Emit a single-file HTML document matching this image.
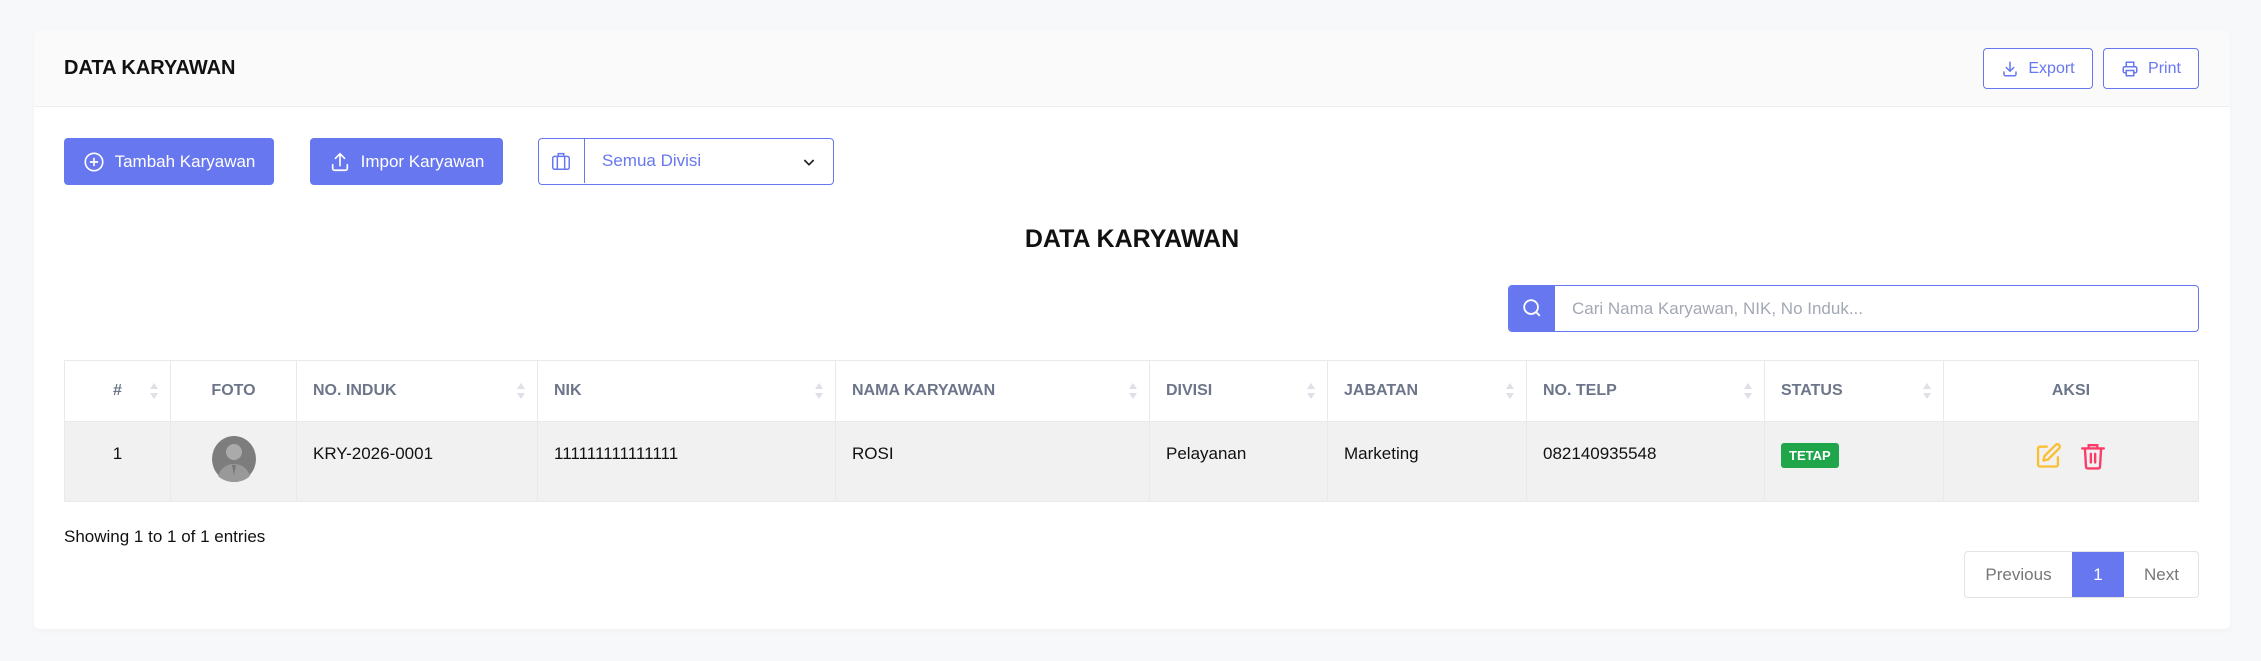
<!DOCTYPE html>
<html><head><meta charset="utf-8"><style>
*{box-sizing:border-box;margin:0;padding:0}
body{width:2261px;height:661px;background:#f7f8fa;font-family:"Liberation Sans",Arial,sans-serif;position:relative;overflow:hidden;color:#111}
.a{position:absolute}
.card{left:34px;top:30px;width:2196px;height:599px;background:#fff;border-radius:5px;box-shadow:0 2px 6px rgba(0,0,0,.03)}
.hdr{left:34px;top:30px;width:2196px;height:77px;background:#fafafa;border-bottom:1px solid #eee;border-radius:5px 5px 0 0}
.btn{background:#6777ef;color:#fff;border-radius:4px;font-size:17px;display:flex;align-items:center;justify-content:center;gap:10px}
.obtn{border:1.5px solid #6777ef;color:#6777ef;border-radius:4px;font-size:16px;display:flex;align-items:center;justify-content:center;gap:9px;background:#fff}
table{border-collapse:collapse;position:absolute;left:64px;top:360px;width:2135px}
th,td{border:1px solid #e9e9e9;text-align:left;padding-left:16px}
th{height:61px;color:#6c7589;font-size:16px;font-weight:bold;position:relative}
td{height:80px;background:#f1f1f1;font-size:17px;vertical-align:top;padding-top:22px}
.s{position:absolute;right:12px;top:22px;width:8px;height:18px}
.s:before{content:"";position:absolute;left:0;top:0;border:4px solid transparent;border-bottom:6px solid #dde0e6;border-top:0}
.s:after{content:"";position:absolute;left:0;top:10px;border:4px solid transparent;border-top:6px solid #dde0e6;border-bottom:0}
</style></head><body>
<div class="a card"></div>
<div class="a hdr"></div>
<div class="a" style="left:64px;top:57px;font-size:20px;font-weight:bold;color:#111">DATA KARYAWAN</div>
<div class="a obtn" style="left:1983px;top:48px;width:110px;height:41px"><svg width="18" height="18" viewBox="0 0 24 24" fill="none" stroke="#6777ef" stroke-width="2" stroke-linecap="round"><path d="M4 16v3a2 2 0 0 0 2 2h12a2 2 0 0 0 2-2v-3M12 3v12M7 10l5 5 5-5"/></svg>Export</div>
<div class="a obtn" style="left:2103px;top:48px;width:96px;height:41px"><svg width="18" height="18" viewBox="0 0 24 24" fill="none" stroke="#6777ef" stroke-width="2"><path d="M7 9V3h10v6M7 17H5a2 2 0 0 1-2-2v-4a2 2 0 0 1 2-2h14a2 2 0 0 1 2 2v4a2 2 0 0 1-2 2h-2M7 14h10v7H7z"/></svg>Print</div>

<div class="a btn" style="left:64px;top:138px;width:210px;height:47px"><svg width="22" height="22" viewBox="0 0 24 24" fill="none" stroke="#fff" stroke-width="1.8"><circle cx="12" cy="12" r="9.5"/><path d="M12 7.5v9M7.5 12h9"/></svg>Tambah Karyawan</div>
<div class="a btn" style="left:310px;top:138px;width:193px;height:47px"><svg width="22" height="22" viewBox="0 0 24 24" fill="none" stroke="#fff" stroke-width="1.8" stroke-linecap="round"><path d="M4 15v4a2 2 0 0 0 2 2h12a2 2 0 0 0 2-2v-4M12 16V3M7 8l5-5 5 5"/></svg>Impor Karyawan</div>
<div class="a" style="left:538px;top:138px;width:296px;height:47px;border:1.5px solid #6777ef;border-radius:4px;background:#fff">
 <div class="a" style="left:45px;top:0;height:44px;border-left:1.5px solid #6777ef"></div>
 <svg class="a" style="left:11px;top:11px" width="22" height="22" viewBox="0 0 24 24" fill="none" stroke="#6777ef" stroke-width="1.6"><rect x="3" y="7" width="18" height="14" rx="2"/><path d="M9 7V4h6v3M8 7v14M16 7v14"/></svg>
 <div class="a" style="left:63px;top:12px;font-size:17px;color:#6777ef">Semua Divisi</div>
 <svg class="a" style="left:262px;top:15px" width="16" height="16" viewBox="0 0 24 24" fill="none" stroke="#222" stroke-width="2.5"><path d="M5 9l7 7 7-7"/></svg>
</div>

<div class="a" style="left:0;width:2264px;top:225px;text-align:center;font-size:25px;font-weight:bold">DATA KARYAWAN</div>

<div class="a" style="left:1508px;top:285px;width:691px;height:47px;border:1.5px solid #6777ef;border-radius:4px;background:#fff;overflow:hidden">
 <div class="a" style="left:0;top:0;width:46px;height:45px;background:#6777ef"></div>
 <svg class="a" style="left:12px;top:11px" width="22" height="22" viewBox="0 0 24 24" fill="none" stroke="#fff" stroke-width="2"><circle cx="11" cy="11" r="7.5"/><path d="M16.5 16.5l4 4"/></svg>
 <div class="a" style="left:63px;top:13px;font-size:17px;color:#a3a8b4">Cari Nama Karyawan, NIK, No Induk...</div>
</div>

<table>
<tr>
<th style="width:106px;text-align:center;padding:0">#<span class="s" style="background:none"></span></th>
<th style="width:126px;text-align:center;padding:0">FOTO</th>
<th style="width:241px">NO. INDUK<span class="s"></span></th>
<th style="width:298px">NIK<span class="s"></span></th>
<th style="width:314px">NAMA KARYAWAN<span class="s"></span></th>
<th style="width:178px">DIVISI<span class="s"></span></th>
<th style="width:199px">JABATAN<span class="s"></span></th>
<th style="width:238px">NO. TELP<span class="s"></span></th>
<th style="width:179px">STATUS<span class="s"></span></th>
<th style="text-align:center;padding:0">AKSI</th>
</tr>
<tr>
<td style="text-align:center;padding-left:0">1</td>
<td style="padding:0;text-align:center;vertical-align:middle"><svg width="44" height="46" viewBox="0 0 44 46"><ellipse cx="22" cy="23" rx="22" ry="23" fill="#7d7d7d"/><circle cx="22" cy="16" r="8" fill="#aaa"/><path d="M6 40c3-9 10-12 16-12s13 3 16 12c-4 4-10 6-16 6S10 44 6 40z" fill="#999"/><path d="M20 29l2 10 2-10z" fill="#777"/></svg></td>
<td>KRY-2026-0001</td>
<td>111111111111111</td>
<td>ROSI</td>
<td>Pelayanan</td>
<td>Marketing</td>
<td>082140935548</td>
<td style="padding-top:21px"><span style="display:inline-block;background:#1fa64a;color:#fff;font-size:13px;font-weight:bold;padding:5px 8px;border-radius:3px">TETAP</span></td>
<td style="padding:0;position:relative">
 <svg class="a" style="left:90px;top:20px" width="28" height="28" viewBox="0 0 24 24" fill="none" stroke="#fbbf34" stroke-width="2" stroke-linecap="round" stroke-linejoin="round"><path d="M11 4H5a1.5 1.5 0 0 0-1.5 1.5v14A1.5 1.5 0 0 0 5 21h14a1.5 1.5 0 0 0 1.5-1.5V13"/><path d="M18.5 2.5a2.1 2.1 0 0 1 3 3L12 15l-4 1 1-4z"/></svg>
 <svg class="a" style="left:136px;top:20px" width="26" height="28" viewBox="0 0 24 26" fill="none" stroke="#fb3c68" stroke-width="2.2" stroke-linecap="round"><path d="M2 6h20M8 6V3h8v3M4.5 6l1 17a1.5 1.5 0 0 0 1.5 1.5h10A1.5 1.5 0 0 0 18.5 23l1-17M10 11v8M14 11v8"/></svg>
</td>
</tr>
</table>

<div class="a" style="left:64px;top:527px;font-size:17px">Showing 1 to 1 of 1 entries</div>

<div class="a" style="left:1964px;top:551px;width:235px;height:47px;border:1px solid #e3e3e3;border-radius:4px;background:#fff;overflow:hidden">
 <div class="a" style="left:0;top:0;width:107px;height:45px;line-height:45px;text-align:center;color:#777;font-size:17px">Previous</div>
 <div class="a" style="left:107px;top:-1px;width:52px;height:47px;line-height:47px;text-align:center;background:#6777ef;color:#fff;font-size:17px">1</div>
 <div class="a" style="left:159px;top:0;width:75px;height:45px;line-height:45px;text-align:center;color:#777;font-size:17px">Next</div>
</div>
</body></html>
